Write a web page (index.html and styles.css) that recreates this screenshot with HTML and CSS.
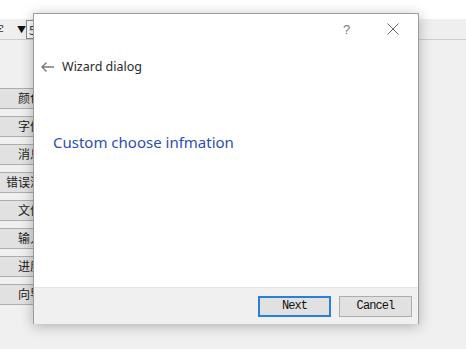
FILE: index.html
```html
<!DOCTYPE html>
<html>
<head>
<meta charset="utf-8">
<link rel="stylesheet" href="styles.css">
</head>
<body>
<div class="app">
  <div class="topstrip"></div>
  <div class="toolbar">
    <span class="tb-label">字</span>
    <span class="tb-arrow">▼</span>
    <span class="tb-combo">5</span>
  </div>
  <div class="side">
    <div class="sbtn">颜色</div>
    <div class="sbtn">字体</div>
    <div class="sbtn">消息</div>
    <div class="sbtn">错误消息</div>
    <div class="sbtn">文件</div>
    <div class="sbtn">输入</div>
    <div class="sbtn">进度</div>
    <div class="sbtn">向导</div>
  </div>
</div>
<div class="dialog">
  <div class="titlebar">
    <span class="help">?</span>
    <svg class="close" width="12" height="12" viewBox="0 0 12 12"><path d="M0.5 0.5 L11.5 11.5 M11.5 0.5 L0.5 11.5" stroke="#6a6a6a" stroke-width="1" fill="none"/></svg>
  </div>
  <div class="header">
    <svg class="back" width="13" height="10" viewBox="0 0 13 10"><path d="M1 5 H13 M5.5 0.5 L1 5 L5.5 9.5" stroke="#7a7a7a" stroke-width="1.4" fill="none"/></svg>
    <span class="htitle">Wizard dialog</span>
  </div>
  <div class="body">
    <div class="info">Custom choose infmation</div>
  </div>
  <div class="footer">
    <button class="btn default">Next</button>
    <button class="btn">Cancel</button>
  </div>
</div>
</body>
</html>
```
FILE: styles.css
```css
html, body {
  margin: 0;
  padding: 0;
}
body {
  width: 466px;
  height: 349px;
  overflow: hidden;
  background: #f0f0f0;
  font-family: "Noto Sans CJK SC", "Noto Sans", sans-serif;
  position: relative;
}
.app {
  display: flex;
  flex-direction: column;
}
.topstrip {
  height: 19px;
  background: #ffffff;
}
.toolbar {
  height: 20px;
  border-bottom: 1px solid #cdcdcd;
  background: #efefef;
  display: flex;
  align-items: center;
  font-size: 12px;
  color: #333;
}
.tb-label {
  margin-left: -8px;
  width: 12px;
}
.tb-arrow {
  font-size: 9px;
  margin-left: 13px;
  color: #111;
}
.tb-combo {
  height: 17px;
  border: 1px solid #8a8a8a;
  background: #fff;
  padding: 0 2px;
  line-height: 17px;
  width: 30px;
}
.side {
  margin-top: 48px;
  display: flex;
  flex-direction: column;
  gap: 7px;
}
.sbtn {
  width: 60px;
  height: 19px;
  background: #e1e1e1;
  border: 1px solid #adadad;
  border-left: none;
  font-size: 12px;
  line-height: 18px;
  color: #222;
  text-align: center;
  box-sizing: content-box;
}
.dialog {
  position: absolute;
  left: 33px;
  top: 13px;
  width: 384px;
  height: 310px;
  border: 1px solid #9c9c9c;
  border-bottom: none;
  background: #ffffff;
  box-shadow: 0 2px 12px rgba(0, 0, 0, 0.28);
  display: flex;
  flex-direction: column;
}
.titlebar {
  height: 30px;
  display: flex;
  align-items: center;
  justify-content: flex-end;
  padding-right: 19px;
  gap: 36px;
}
.help {
  font-family: "Liberation Sans", sans-serif;
  font-size: 13px;
  color: #7a7a7a;
  width: 8px;
}
.close {
  display: block;
}
.header {
  height: 46px;
  display: flex;
  align-items: center;
  padding-left: 7px;
  padding-bottom: 7px;
  box-sizing: border-box;
  margin-top: 3px;
}
.back {
  display: block;
}
.htitle {
  margin-left: 8px;
  font-family: "Noto Sans", sans-serif;
  font-size: 12.5px;
  color: #2a2a2a;
}
.body {
  flex: 1;
  padding-left: 19px;
  padding-top: 39px;
}
.info {
  font-family: "Noto Sans", sans-serif;
  font-size: 15px;
  color: #2b4fb5;
}
.footer {
  height: 37px;
  background: #f0f0f0;
  border-top: 1px solid #e4e4e4;
  box-sizing: border-box;
  display: flex;
  justify-content: flex-end;
  align-items: center;
  padding-right: 6px;
  gap: 8px;
}
.btn {
  width: 73px;
  height: 21px;
  background: #e1e1e1;
  border: 1px solid #adadad;
  font-family: "Liberation Mono", monospace;
  font-size: 12px;
  letter-spacing: -0.9px;
  color: #111;
  padding: 0;
  margin: 0;
}
.btn.default {
  border: 2px solid #2b7fd6;
}
```
